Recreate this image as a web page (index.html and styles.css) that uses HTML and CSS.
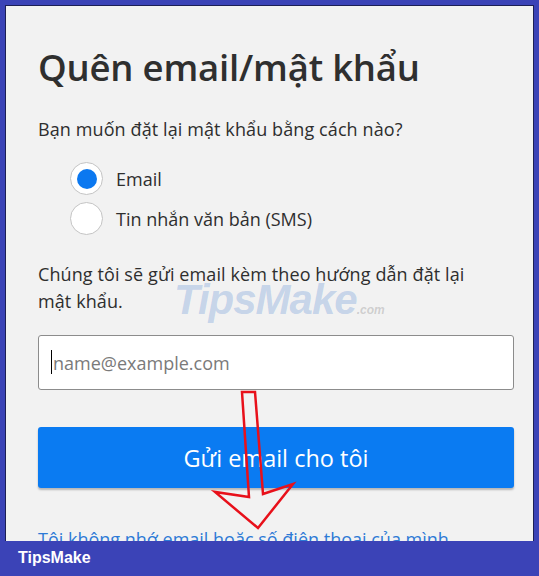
FILE: index.html
```html
<!DOCTYPE html>
<html lang="vi">
<head>
    <meta charset="UTF-8">
    <meta name="viewport" content="width=device-width, initial-scale=1.0">
    <title>Quên email/mật khẩu</title>
    <link rel="stylesheet" href="styles.css">
</head>
<body>
    <div class="frame">
        <div class="panel">
            <h1>Quên email/mật khẩu</h1>
            <p class="question">Bạn muốn đặt lại mật khẩu bằng cách nào?</p>

            <div class="options">
                <label class="option">
                    <input type="radio" name="method" checked>
                    <span>Email</span>
                </label>
                <label class="option">
                    <input type="radio" name="method">
                    <span>Tin nhắn văn bản (SMS)</span>
                </label>
            </div>

            <p class="note">Chúng tôi sẽ gửi email kèm theo hướng dẫn đặt lại mật khẩu.</p>

            <div class="field">
                <span class="caret"></span>
                <input type="email" placeholder="name@example.com">
            </div>

            <button class="send">Gửi email cho tôi</button>

            <a class="forgot" href="#">Tôi không nhớ email hoặc số điện thoại của mình</a>

            <div class="watermark">TipsMake<small>.com</small></div>
        </div>
        <div class="footer">TipsMake</div>

        <svg class="arrow" width="539" height="576" viewBox="0 0 539 576">
            <polygon points="242,392 255,392 263,494 293,484 258,528 215,492 249,497"
                     fill="none" stroke="#e8101a" stroke-width="2.5" stroke-linejoin="miter"/>
        </svg>
    </div>
</body>
</html>
```

FILE: styles.css
```css
html, body {
    margin: 0;
    padding: 0;
}
body {
    background: #3b43b7;
    font-family: "Open Sans", "Noto Sans", sans-serif;
    color: #2e2e2e;
}
.frame {
    position: relative;
    width: 539px;
    height: 576px;
    display: flex;
    flex-direction: column;
    padding: 5px 5px 0 5px;
    box-sizing: border-box;
    overflow: hidden;
}
.panel {
    position: relative;
    flex: 1;
    background: #f2f2f2;
    border: 1px solid #1c1f55;
    border-bottom: none;
    padding: 0 19px 0 32px;
    overflow: hidden;
}
h1 {
    margin: 33px 0 0 0;
    font-size: 36.5px;
    font-weight: 600;
    line-height: 56px;
    letter-spacing: -0.2px;
    color: #2f2f2f;
}
.question {
    margin: 21px 0 0 0;
    font-size: 18px;
    line-height: 26px;
    letter-spacing: 0.1px;
}
.options {
    margin: 20px 0 0 32px;
    display: flex;
    flex-direction: column;
    gap: 7px;
}
.option {
    display: flex;
    align-items: center;
    gap: 13px;
    font-size: 18px;
}
.option input {
    appearance: none;
    -webkit-appearance: none;
    margin: 0;
    width: 33px;
    height: 33px;
    border-radius: 50%;
    background: #fff;
    border: 1px solid #c4c4c4;
    box-sizing: border-box;
    position: relative;
}
.option input:checked::after {
    content: "";
    position: absolute;
    left: 5.5px;
    top: 5.5px;
    width: 20px;
    height: 20px;
    border-radius: 50%;
    background: #0b78f0;
}
.note {
    margin: 26px 0 0 0;
    max-width: 450px;
    font-size: 18px;
    line-height: 27px;
    letter-spacing: 0.1px;
}
.field {
    position: relative;
    margin-top: 20px;
}
.field input {
    display: block;
    width: 100%;
    height: 55px;
    box-sizing: border-box;
    border: 1px solid #8c8c8c;
    border-radius: 3px;
    background: #fff;
    padding: 0 14px;
    font-family: inherit;
    font-size: 18px;
    outline: none;
}
.field input::placeholder {
    color: #7a7a7a;
}
.caret {
    position: absolute;
    left: 13px;
    top: 15px;
    width: 1px;
    height: 24px;
    background: #000;
    z-index: 1;
}
.send {
    display: block;
    width: 100%;
    height: 61px;
    margin-top: 37px;
    border: none;
    border-radius: 3px;
    background: #0a7bf2;
    color: #fff;
    font-family: inherit;
    font-size: 23.5px;
    box-shadow: 0 2px 2px rgba(0, 0, 0, 0.25);
}
.forgot {
    display: block;
    margin-top: 39px;
    font-size: 18px;
    color: #2d7ad6;
    text-decoration: none;
    white-space: nowrap;
}
.watermark {
    position: absolute;
    left: 168px;
    top: 270px;
    font-family: "Liberation Sans", sans-serif;
    font-weight: 700;
    font-style: italic;
    font-size: 42px;
    letter-spacing: -1px;
    color: rgba(90, 140, 210, 0.3);
    pointer-events: none;
}
.watermark small {
    font-size: 12px;
    letter-spacing: 0;
    color: rgba(120, 120, 120, 0.3);
}
.footer {
    height: 35px;
    flex-shrink: 0;
    margin: 0 -5px;
    padding-left: 18px;
    background: #3b43b7;
    color: #fff;
    font-family: "Liberation Sans", sans-serif;
    font-weight: 700;
    font-size: 16px;
    line-height: 33px;
}
.arrow {
    position: absolute;
    left: 0;
    top: 0;
    pointer-events: none;
}
```
